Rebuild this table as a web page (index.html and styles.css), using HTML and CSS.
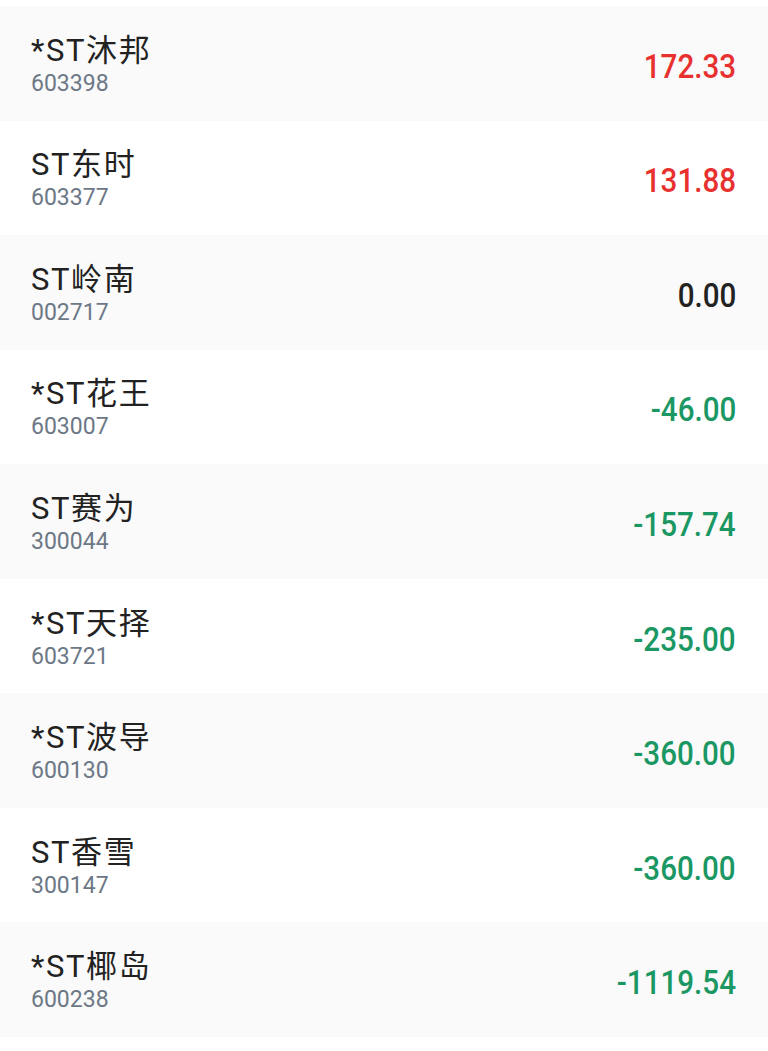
FILE: index.html
```html
<!DOCTYPE html>
<html lang="zh-CN">
<head>
<meta charset="utf-8">
<title>ST 列表</title>
<link rel="stylesheet" href="styles.css">
</head>
<body>
<ul class="list">
  <li class="row"><div class="info"><div class="name">*ST沐邦</div><div class="code">603398</div></div><div class="val up"><span class="num">172.33</span></div></li>
  <li class="row"><div class="info"><div class="name">ST东时</div><div class="code">603377</div></div><div class="val up"><span class="num">131.88</span></div></li>
  <li class="row"><div class="info"><div class="name">ST岭南</div><div class="code">002717</div></div><div class="val flat"><span class="num">0.00</span></div></li>
  <li class="row"><div class="info"><div class="name">*ST花王</div><div class="code">603007</div></div><div class="val down"><span class="num">-46.00</span></div></li>
  <li class="row"><div class="info"><div class="name">ST赛为</div><div class="code">300044</div></div><div class="val down"><span class="num">-157.74</span></div></li>
  <li class="row"><div class="info"><div class="name">*ST天择</div><div class="code">603721</div></div><div class="val down"><span class="num">-235.00</span></div></li>
  <li class="row"><div class="info"><div class="name">*ST波导</div><div class="code">600130</div></div><div class="val down"><span class="num">-360.00</span></div></li>
  <li class="row"><div class="info"><div class="name">ST香雪</div><div class="code">300147</div></div><div class="val down"><span class="num">-360.00</span></div></li>
  <li class="row"><div class="info"><div class="name">*ST椰岛</div><div class="code">600238</div></div><div class="val down"><span class="num">-1119.54</span></div></li>
</ul>
</body>
</html>
```
FILE: styles.css
```css
html, body {
  margin: 0;
  padding: 0;
  background: #ffffff;
}
body {
  padding-top: 6px;
  font-family: Roboto, "Noto Sans CJK SC", sans-serif;
}
.list {
  list-style: none;
  margin: 0;
  padding: 0;
}
.row {
  height: 114.56px;
  box-sizing: border-box;
  display: flex;
  align-items: center;
  justify-content: space-between;
  padding: 0 32px 0 31px;
  background: #ffffff;
}
.row:nth-child(odd) {
  background: #fafafa;
}
.info {
  display: flex;
  flex-direction: column;
  padding-top: 4px;
}
.name {
  font-size: 31px;
  line-height: 36px;
  letter-spacing: 1.6px;
  color: #222222;
}
.code {
  margin-top: 1px;
  font-size: 23px;
  line-height: 28px;
  color: #6c7886;
}
.val {
  padding-top: 5px;
  font-size: 34px;
  line-height: 40px;
  font-weight: 500;
}
.num {
  display: inline-block;
  transform: scaleX(0.87);
  transform-origin: right center;
}
.up { color: #e8312f; }
.flat { color: #222222; }
.down { color: #1a9763; }
```
